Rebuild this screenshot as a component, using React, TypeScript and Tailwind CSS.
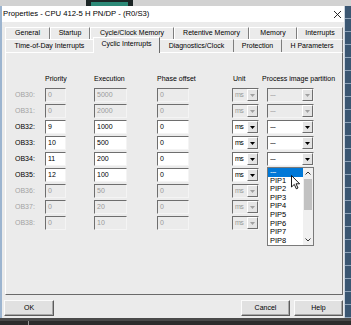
import React from 'react';

interface ObRow {
  ob: string;
  on: boolean;
  prio: string;
  exec: string;
  phase: string;
  pipHidden?: boolean;
}

// rows OB35..OB38 have their partition box hidden behind the open list
const rows: ObRow[] = [
  { ob: 'OB30', on: false, prio: '0', exec: '5000', phase: '0' },
  { ob: 'OB31', on: false, prio: '0', exec: '2000', phase: '0' },
  { ob: 'OB32', on: true, prio: '9', exec: '1000', phase: '0' },
  { ob: 'OB33', on: true, prio: '10', exec: '500', phase: '0' },
  { ob: 'OB34', on: true, prio: '11', exec: '200', phase: '0' },
  { ob: 'OB35', on: true, prio: '12', exec: '100', phase: '0', pipHidden: true },
  { ob: 'OB36', on: false, prio: '0', exec: '50', phase: '0', pipHidden: true },
  { ob: 'OB37', on: false, prio: '0', exec: '20', phase: '0', pipHidden: true },
  { ob: 'OB38', on: false, prio: '0', exec: '10', phase: '0', pipHidden: true },
];

const topTabs = [
  { label: 'General', w: 'w-[45px]' },
  { label: 'Startup', w: 'w-[40px]' },
  { label: 'Cycle/Clock Memory', w: 'w-[84px]' },
  { label: 'Retentive Memory', w: 'w-[75px]' },
  { label: 'Memory', w: 'w-[48px]' },
  { label: 'Interrupts', w: 'w-[46px]' },
];

const pips = ['PIP1', 'PIP2', 'PIP3', 'PIP4', 'PIP5', 'PIP6', 'PIP7', 'PIP8'];

function Field({ value, on, w }: { value: string; on: boolean; w: string }) {
  return (
    <div
      className={`${w} h-[14px] border border-t-[#6e6e6e] border-l-[#6e6e6e] border-b-[#f4f4f4] border-r-[#f4f4f4] px-[2px] text-[7px] leading-[12px] ${
        on ? 'bg-white text-black' : 'bg-[#ebebeb] text-[#9a9a9a]'
      }`}
    >
      {value}
    </div>
  );
}

function Combo({ value, on, w }: { value: string; on: boolean; w: string }) {
  return (
    <div
      className={`${w} h-[14px] flex border border-t-[#6e6e6e] border-l-[#6e6e6e] border-b-[#f4f4f4] border-r-[#f4f4f4] ${
        on ? 'bg-white text-black' : 'bg-[#ebebeb] text-[#9a9a9a]'
      }`}
    >
      <div className="flex-1 px-[2px] text-[7px] leading-[12px] tracking-[-0.6px]">{value}</div>
      <div className="w-[11px] h-[12px] flex items-center justify-center bg-[#e4e4e4] border border-t-white border-l-white border-b-[#6e6e6e] border-r-[#6e6e6e]">
        <svg width="5" height="3" viewBox="0 0 5 3">
          <path d="M0 0 L5 0 L2.5 3 Z" fill={on ? '#000' : '#a0a0a0'} />
        </svg>
      </div>
    </div>
  );
}

export default function App() {
  return (
    <div className="w-[351px] h-[325px] flex flex-col overflow-hidden relative bg-[#3a3a3a] font-['Liberation_Sans',Arial,sans-serif]">
      {/* desktop strip above the dialog */}
      <div className="h-[6px] shrink-0 flex bg-[#d2d2d2]">
        <div className="w-[86px]" />
        <div className="w-[47px] bg-[#1c2626] flex items-end justify-center">
          <div className="w-[37px] h-[4px] bg-[#2d8a78]" />
        </div>
      </div>

      <div className="flex flex-1 min-h-0">
        {/* DIALOG */}
        <div className="w-[344px] flex flex-col border-l-2 border-[#9cb4cf] bg-[#ebebeb]">
          {/* TITLE */}
          <div className="h-[16px] shrink-0 bg-white flex items-center justify-between pl-[1px] pr-[2px]">
            <span className="text-[7.7px] text-black">Properties - CPU 412-5 H PN/DP - (R0/S3)</span>
            <svg width="9" height="9" viewBox="0 0 9 9">
              <path d="M1 1 L8 8 M8 1 L1 8" stroke="#111" strokeWidth="0.9" />
            </svg>
          </div>

          {/* BODY */}
          <div className="flex-1 flex flex-col pt-[5px]">
            {/* tab row 1 */}
            <div className="h-[12px] flex ml-[3px] text-[7px] text-black">
              {topTabs.map((t) => (
                <div
                  key={t.label}
                  className={`${t.w} h-full flex items-center justify-center whitespace-nowrap border-t border-l border-t-white border-l-white border-r border-r-[#7d7d7d]`}
                >
                  {t.label}
                </div>
              ))}
            </div>

            {/* tab row 2 */}
            <div className="h-[13px] flex items-end ml-[3px] text-[7px] text-black">
              <div className="w-[88px] h-[13px] flex items-center justify-center whitespace-nowrap border-l border-t border-l-white border-t-white">
                Time-of-Day Interrupts
              </div>
              <div className="relative z-10 w-[67px] h-[16px] -mb-[1px] flex items-center justify-center whitespace-nowrap bg-[#ebebeb] border-t border-l border-t-white border-l-white border-r border-r-[#6a6a6a] pb-[2px]">
                Cyclic Interrupts
              </div>
              <div className="w-[74px] h-[13px] flex items-center justify-center whitespace-nowrap border-t border-t-white border-r border-r-[#7d7d7d]">
                Diagnostics/Clock
              </div>
              <div className="w-[48px] h-[13px] flex items-center justify-center whitespace-nowrap border-t border-t-white border-r border-r-[#7d7d7d]">
                Protection
              </div>
              <div className="w-[61px] h-[13px] flex items-center justify-center whitespace-nowrap border-t border-t-white border-r border-r-[#7d7d7d]">
                H Parameters
              </div>
            </div>

            {/* PANEL */}
            <div className="h-[243px] w-[338px] ml-[3px] border border-t-white border-l-white border-r-[#6a6a6a] border-b-[#6a6a6a] pt-[21px] pl-[9px]">
              {/* headers */}
              <div className="h-[9px] flex text-[7px] leading-[9px] text-black whitespace-nowrap">
                <div className="w-[30px]" />
                <div className="w-[49px]">Priority</div>
                <div className="w-[63px]">Execution</div>
                <div className="w-[76px]">Phase offset</div>
                <div className="w-[29px]">Unit</div>
                <div>Process image partition</div>
              </div>

              <div className="mt-[4px] flex flex-col">
                {rows.map((r) => (
                  <div key={r.ob} className="h-[16px] flex items-center">
                    <div className={`w-[30px] text-[7px] ${r.on ? 'text-black' : 'text-[#a3a3a3]'}`}>{r.ob}:</div>
                    <Field value={r.prio} on={r.on} w="w-[21px]" />
                    <div className="w-[28px]" />
                    <Field value={r.exec} on={r.on} w="w-[33px]" />
                    <div className="w-[30px]" />
                    <Field value={r.phase} on={r.on} w="w-[32px]" />
                    <div className="w-[43px]" />
                    <Combo value="ms" on={r.on} w="w-[27px]" />
                    <div className="w-[8px]" />
                    {r.pipHidden ? <div className="w-[47px] h-[14px]" /> : <Combo value="---" on={r.on} w="w-[47px]" />}
                  </div>
                ))}
              </div>
            </div>

            {/* BUTTONS */}
            <div className="mt-[5px] h-[16px] flex justify-between pl-[2px] pr-[1px] text-[7px] text-black">
              <button className="w-[50px] h-[16px] bg-[#e1e1e1] border border-t-[#fbfbfb] border-l-[#fbfbfb] border-b-[#5c5c5c] border-r-[#5c5c5c] shadow-[inset_-1px_-1px_0_#a8a8a8]">
                OK
              </button>
              <div className="flex gap-[4px]">
                <button className="w-[49px] h-[16px] bg-[#e1e1e1] border border-t-[#fbfbfb] border-l-[#fbfbfb] border-b-[#5c5c5c] border-r-[#5c5c5c] shadow-[inset_-1px_-1px_0_#a8a8a8]">
                  Cancel
                </button>
                <button className="w-[49px] h-[16px] bg-[#e1e1e1] border border-t-[#fbfbfb] border-l-[#fbfbfb] border-b-[#5c5c5c] border-r-[#5c5c5c] shadow-[inset_-1px_-1px_0_#a8a8a8]">
                  Help
                </button>
              </div>
            </div>
          </div>
        </div>

        {/* background app on the right */}
        <div className="flex-1 border-l border-[#c9d3de] bg-[repeating-linear-gradient(to_bottom,#3a5672_0px,#3a5672_12px,#8ea3b9_12px,#8ea3b9_13px)]" />
      </div>

      {/* desktop strip below */}
      <div className="h-[7px] shrink-0 flex flex-col">
        <div className="h-[3px] bg-[#4a4a4a]" />
        <div className="flex-1 bg-[#2c2c2c] pl-[28px]">
          <div className="w-[1px] h-full bg-[#9a9a9a]" />
        </div>
      </div>

      {/* open dropdown list */}
      <div className="absolute left-[267px] top-[167px] w-[47px] h-[79px] flex bg-white border border-[#7a7a7a] text-[7.5px] text-black">
        <div className="flex-1 flex flex-col">
          <div className="h-[8.6px] leading-[8.6px] bg-[#0078d7] text-white px-[2px] tracking-[-0.6px]">---</div>
          {pips.map((p) => (
            <div key={p} className="h-[8.6px] leading-[8.6px] px-[2px]">
              {p}
            </div>
          ))}
        </div>
        <div className="w-[10px] flex flex-col bg-[#f0f0f0]">
          <div className="h-[10px] flex items-center justify-center">
            <svg width="6" height="4" viewBox="0 0 6 4">
              <path d="M0.5 3.5 L3 1 L5.5 3.5" stroke="#333" strokeWidth="1" fill="none" />
            </svg>
          </div>
          <div className="h-[31px] mx-[1px] mt-[1px] bg-[#c2c2c2]" />
          <div className="flex-1" />
          <div className="h-[10px] flex items-center justify-center">
            <svg width="6" height="4" viewBox="0 0 6 4">
              <path d="M0.5 0.5 L3 3 L5.5 0.5" stroke="#333" strokeWidth="1" fill="none" />
            </svg>
          </div>
        </div>
      </div>

      {/* mouse pointer */}
      <svg className="absolute left-[291px] top-[175px]" width="10" height="15" viewBox="0 0 10 15">
        <path d="M0.5 0.5 L0.5 12 L3.3 9.4 L5.3 13.8 L7 13 L5 8.8 L8.6 8.8 Z" fill="#fff" stroke="#000" strokeWidth="0.9" strokeLinejoin="round" />
      </svg>
    </div>
  );
}
